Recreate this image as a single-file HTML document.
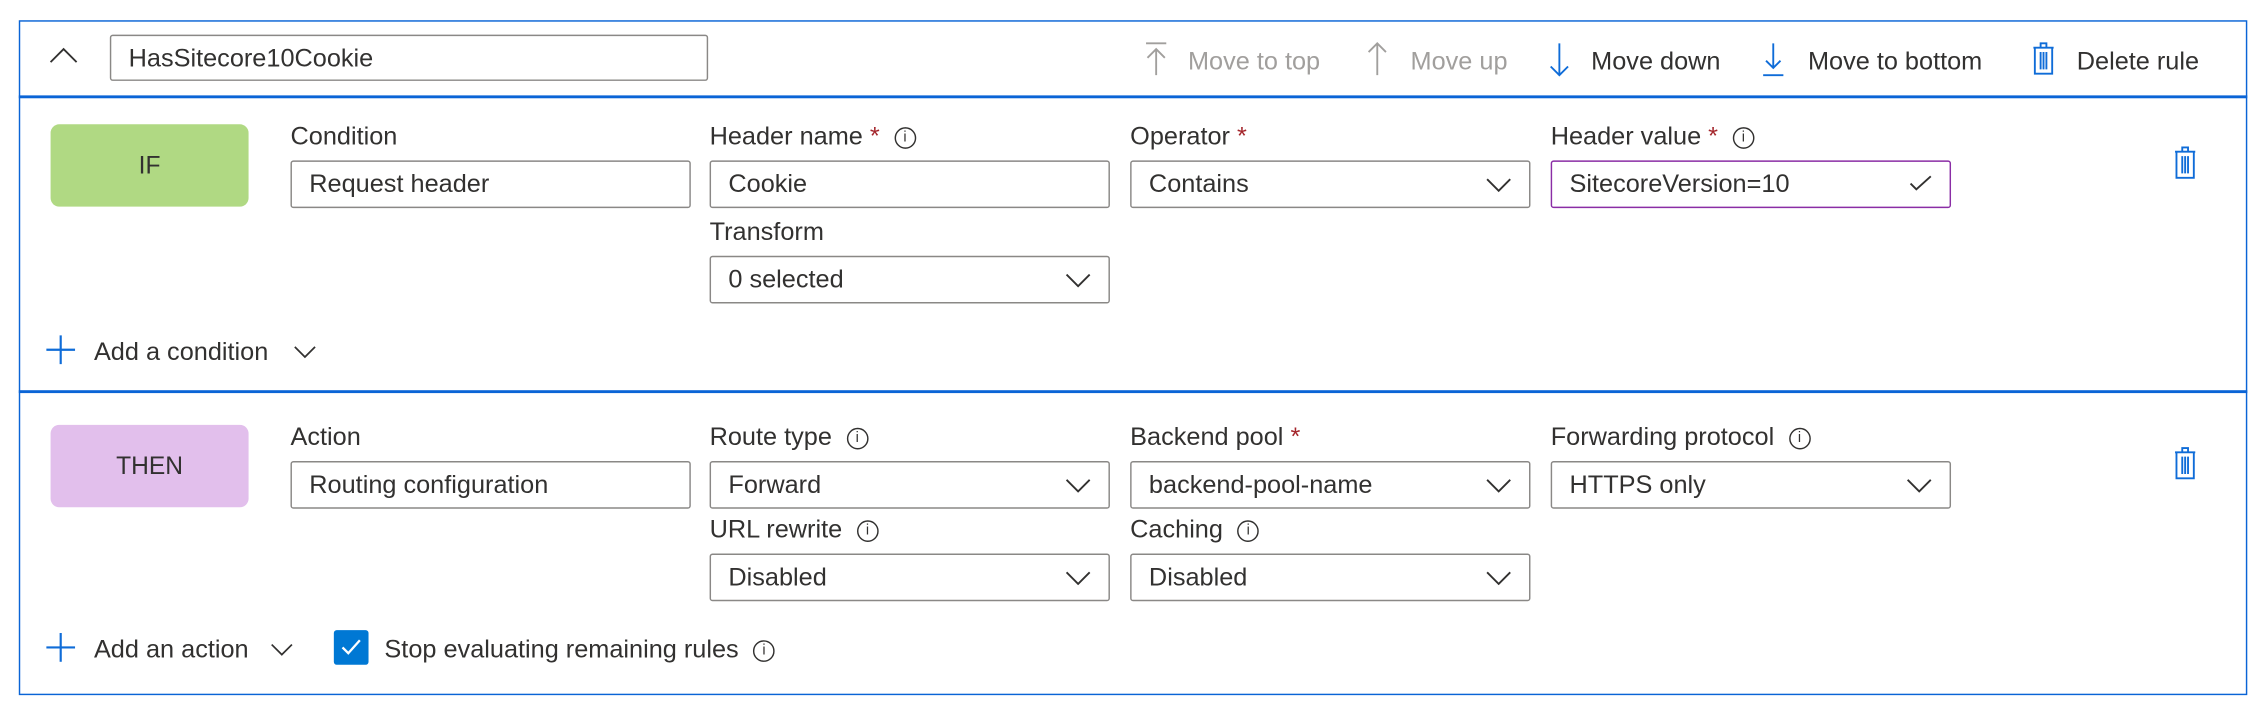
<!DOCTYPE html>
<html><head><meta charset="utf-8"><style>
html,body{margin:0;padding:0;background:#fff;width:2266px;height:716px;overflow:hidden}
#w{position:absolute;left:0;top:0;width:1568px;height:496px;transform:scale(1.4452);transform-origin:0 0;font-family:"Liberation Sans",sans-serif;color:#323130;font-size:17.5px}
.a{position:absolute;white-space:nowrap}
.box{position:absolute;border:1px solid #8a8886;border-radius:2px;box-sizing:border-box;height:33px;line-height:31px;padding-left:12px;background:#fff}
.chev{position:absolute;right:12px;top:11px}
.req{color:#a4262c}
.info{display:inline-block;width:15px;height:15px;border:1px solid #323130;border-radius:50%;font-size:10px;line-height:14px;text-align:center;vertical-align:2px;margin-left:10px;box-sizing:border-box}
.badge{position:absolute;left:35px;width:137px;height:57px;border-radius:6px;text-align:center;line-height:57px;font-size:17px}
.lbl{position:absolute;white-space:nowrap;font-size:17.5px}
.g{color:#a19f9d}
</style></head><body><div id="w">
<div class="a" style="left:13px;top:14px;width:1540px;height:465px;border:1.5px solid #0a64d6"></div>
<div class="a" style="left:13px;top:66px;width:1542px;height:1.5px;background:#0a64d6"></div>
<div class="a" style="left:13px;top:270px;width:1542px;height:1.5px;background:#0a64d6"></div>

<svg class="a" style="left:34px;top:32px" width="20" height="12"><path d="M1 11 L10 2 L19 11" fill="none" stroke="#323130" stroke-width="1.3"/></svg>
<div class="box" style="left:76px;top:24px;width:414px;height:32px;line-height:30px">HasSitecore10Cookie</div>

<svg class="a" style="left:792px;top:29px" width="16" height="24"><path d="M1 1H15M8 5V23M2 11L8 5L14 11" fill="none" stroke="#a19f9d" stroke-width="1.3"/></svg>
<div class="a g" style="left:822px;top:32px">Move to top</div>
<svg class="a" style="left:945px;top:29px" width="16" height="24"><path d="M8 1V23M2 7L8 1L14 7" fill="none" stroke="#a19f9d" stroke-width="1.3"/></svg>
<div class="a g" style="left:976px;top:32px">Move up</div>
<svg class="a" style="left:1071px;top:29px" width="16" height="24"><path d="M8 1V23M2 17L8 23L14 17" fill="none" stroke="#0f6cd8" stroke-width="1.3"/></svg>
<div class="a" style="left:1101px;top:32px">Move down</div>
<svg class="a" style="left:1219px;top:29px" width="16" height="24"><path d="M8 1V18M3 13L8 18L13 13M1 23H15" fill="none" stroke="#0f6cd8" stroke-width="1.3"/></svg>
<div class="a" style="left:1251px;top:32px">Move to bottom</div>
<svg class="a" style="left:1405px;top:29px" width="18" height="24"><path d="M2 4H16M7 4V1H11V4M3 4V22H15V4M7 7V19M9 7V19M11 7V19" fill="none" stroke="#0f6cd8" stroke-width="1.3"/></svg>
<div class="a" style="left:1437px;top:32px">Delete rule</div>

<!-- IF -->
<div class="badge" style="top:86px;background:#b0d983">IF</div>
<div class="lbl" style="left:201px;top:84px">Condition</div>
<div class="box" style="left:201px;top:111px;width:277px">Request header</div>
<div class="lbl" style="left:491px;top:84px">Header name <span class="req">*</span><span class="info">i</span></div>
<div class="box" style="left:491px;top:111px;width:277px">Cookie</div>
<div class="lbl" style="left:782px;top:84px">Operator <span class="req">*</span></div>
<div class="box" style="left:782px;top:111px;width:277px">Contains<svg class="chev" width="18" height="10"><path d="M1 1L9 9L17 1" fill="none" stroke="#323130" stroke-width="1.3"/></svg></div>
<div class="lbl" style="left:1073px;top:84px">Header value <span class="req">*</span><span class="info">i</span></div>
<div class="box" style="left:1073px;top:111px;width:277px;border:1.5px solid #8a2da5">SitecoreVersion=10<svg class="chev" width="16" height="12" style="top:9px"><path d="M1 6L5 10L15 1" fill="none" stroke="#323130" stroke-width="1.3"/></svg></div>
<svg class="a" style="left:1503px;top:101px" width="18" height="24"><path d="M2 4H16M7 4V1H11V4M3 4V22H15V4M7 7V19M9 7V19M11 7V19" fill="none" stroke="#0f6cd8" stroke-width="1.3"/></svg>
<div class="lbl" style="left:491px;top:150px">Transform</div>
<div class="box" style="left:491px;top:177px;width:277px">0 selected<svg class="chev" width="18" height="10"><path d="M1 1L9 9L17 1" fill="none" stroke="#323130" stroke-width="1.3"/></svg></div>
<svg class="a" style="left:32px;top:232px" width="20" height="20"><path d="M10 0V20M0 10H20" stroke="#0f6cd8" stroke-width="1.5"/></svg>
<div class="a" style="left:65px;top:233px">Add a condition</div>
<svg class="a" style="left:203px;top:239px" width="16" height="9"><path d="M1 1L8 8L15 1" fill="none" stroke="#323130" stroke-width="1.2"/></svg>

<!-- THEN -->
<div class="badge" style="top:294px;background:#e2bfec">THEN</div>
<div class="lbl" style="left:201px;top:292px">Action</div>
<div class="box" style="left:201px;top:319px;width:277px">Routing configuration</div>
<div class="lbl" style="left:491px;top:292px">Route type<span class="info">i</span></div>
<div class="box" style="left:491px;top:319px;width:277px">Forward<svg class="chev" width="18" height="10"><path d="M1 1L9 9L17 1" fill="none" stroke="#323130" stroke-width="1.3"/></svg></div>
<div class="lbl" style="left:782px;top:292px">Backend pool <span class="req">*</span></div>
<div class="box" style="left:782px;top:319px;width:277px">backend-pool-name<svg class="chev" width="18" height="10"><path d="M1 1L9 9L17 1" fill="none" stroke="#323130" stroke-width="1.3"/></svg></div>
<div class="lbl" style="left:1073px;top:292px">Forwarding protocol<span class="info">i</span></div>
<div class="box" style="left:1073px;top:319px;width:277px">HTTPS only<svg class="chev" width="18" height="10"><path d="M1 1L9 9L17 1" fill="none" stroke="#323130" stroke-width="1.3"/></svg></div>
<svg class="a" style="left:1503px;top:309px" width="18" height="24"><path d="M2 4H16M7 4V1H11V4M3 4V22H15V4M7 7V19M9 7V19M11 7V19" fill="none" stroke="#0f6cd8" stroke-width="1.3"/></svg>
<div class="lbl" style="left:491px;top:356px">URL rewrite<span class="info">i</span></div>
<div class="box" style="left:491px;top:383px;width:277px">Disabled<svg class="chev" width="18" height="10"><path d="M1 1L9 9L17 1" fill="none" stroke="#323130" stroke-width="1.3"/></svg></div>
<div class="lbl" style="left:782px;top:356px">Caching<span class="info">i</span></div>
<div class="box" style="left:782px;top:383px;width:277px">Disabled<svg class="chev" width="18" height="10"><path d="M1 1L9 9L17 1" fill="none" stroke="#323130" stroke-width="1.3"/></svg></div>
<svg class="a" style="left:32px;top:438px" width="20" height="20"><path d="M10 0V20M0 10H20" stroke="#0f6cd8" stroke-width="1.5"/></svg>
<div class="a" style="left:65px;top:439px">Add an action</div>
<svg class="a" style="left:187px;top:445px" width="16" height="9"><path d="M1 1L8 8L15 1" fill="none" stroke="#323130" stroke-width="1.2"/></svg>
<div class="a" style="left:231px;top:436px;width:24px;height:24px;background:#0078d4;border-radius:2px"><svg width="24" height="24"><path d="M6 12L10 16L18 7" fill="none" stroke="#fff" stroke-width="1.6"/></svg></div>
<div class="a" style="left:266px;top:439px">Stop evaluating remaining rules<span class="info">i</span></div>
</div></body></html>
